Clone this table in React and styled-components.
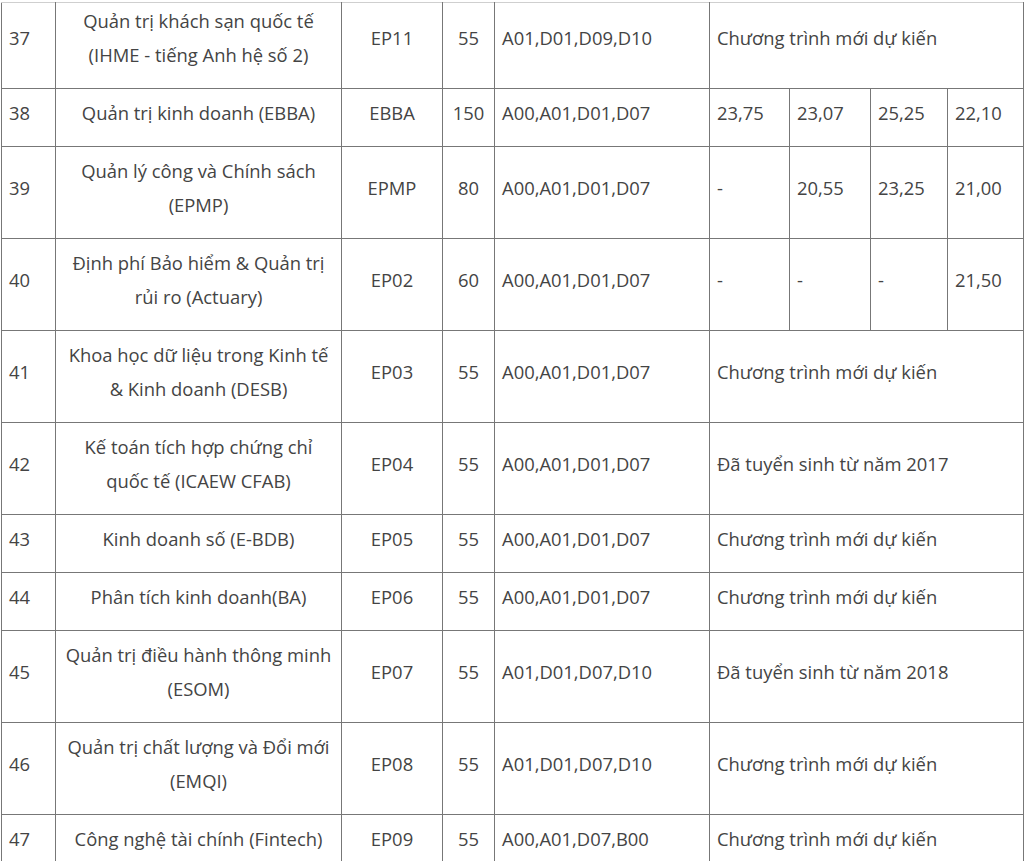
import React from "react";
import styled, { createGlobalStyle } from "styled-components";

const GlobalStyle = createGlobalStyle`
  html, body {
    margin: 0;
    padding: 0;
    background: #fff;
  }
  body {
    font-family: "Open Sans", "Liberation Sans", sans-serif;
    color: #444;
  }
`;

const Wrapper = styled.div`
  padding: 2px 0 0 1px;
`;

const Table = styled.table`
  width: 1023px;
  border-collapse: collapse;
  table-layout: fixed;
  font-size: 18.4px;
  line-height: 34px;
  border-top: 1px solid #cfcfcf;

  tbody tr:first-child td {
    padding-top: 1px;
    border-top-color: #cfcfcf;
  }
`;

const Cell = styled.td`
  border: 1px solid #777;
  padding: 7px 7px 16px;
  vertical-align: middle;
  text-align: ${props => props.$align || "left"};
  white-space: nowrap;
  overflow: hidden;
`;

const widths = [54, 286, 101, 52, 215, 80, 81, 77, 76];

const rows = [
  {
    no: 37,
    name: ["Quản trị khách sạn quốc tế", "(IHME - tiếng Anh hệ số 2)"],
    code: "EP11",
    quota: 55,
    combo: "A01,D01,D09,D10",
    note: "Chương trình mới dự kiến"
  },
  {
    no: 38,
    name: ["Quản trị kinh doanh (EBBA)"],
    code: "EBBA",
    quota: 150,
    combo: "A00,A01,D01,D07",
    scores: ["23,75", "23,07", "25,25", "22,10"]
  },
  {
    no: 39,
    name: ["Quản lý công và Chính sách", "(EPMP)"],
    code: "EPMP",
    quota: 80,
    combo: "A00,A01,D01,D07",
    scores: ["-", "20,55", "23,25", "21,00"]
  },
  {
    no: 40,
    name: ["Định phí Bảo hiểm & Quản trị", "rủi ro (Actuary)"],
    code: "EP02",
    quota: 60,
    combo: "A00,A01,D01,D07",
    scores: ["-", "-", "-", "21,50"]
  },
  {
    no: 41,
    name: ["Khoa học dữ liệu trong Kinh tế", "& Kinh doanh (DESB)"],
    code: "EP03",
    quota: 55,
    combo: "A00,A01,D01,D07",
    note: "Chương trình mới dự kiến"
  },
  {
    no: 42,
    name: ["Kế toán tích hợp chứng chỉ", "quốc tế (ICAEW CFAB)"],
    code: "EP04",
    quota: 55,
    combo: "A00,A01,D01,D07",
    note: "Đã tuyển sinh từ năm 2017"
  },
  {
    no: 43,
    name: ["Kinh doanh số (E-BDB)"],
    code: "EP05",
    quota: 55,
    combo: "A00,A01,D01,D07",
    note: "Chương trình mới dự kiến"
  },
  {
    no: 44,
    name: ["Phân tích kinh doanh(BA)"],
    code: "EP06",
    quota: 55,
    combo: "A00,A01,D01,D07",
    note: "Chương trình mới dự kiến"
  },
  {
    no: 45,
    name: ["Quản trị điều hành thông minh", "(ESOM)"],
    code: "EP07",
    quota: 55,
    combo: "A01,D01,D07,D10",
    note: "Đã tuyển sinh từ năm 2018"
  },
  {
    no: 46,
    name: ["Quản trị chất lượng và Đổi mới", "(EMQI)"],
    code: "EP08",
    quota: 55,
    combo: "A01,D01,D07,D10",
    note: "Chương trình mới dự kiến"
  },
  {
    no: 47,
    name: ["Công nghệ tài chính (Fintech)"],
    code: "EP09",
    quota: 55,
    combo: "A00,A01,D07,B00",
    note: "Chương trình mới dự kiến"
  }
];

const App = () => (
  <>
    <GlobalStyle />
    <Wrapper>
      <Table>
        <colgroup>
          {widths.map((w, i) => (
            <col key={i} style={{ width: w }} />
          ))}
        </colgroup>
        <tbody>
          {rows.map(row => (
            <tr key={row.no}>
              <Cell>{row.no}</Cell>
              <Cell $align="center">
                {row.name.map((line, i) => (
                  <div key={i}>{line}</div>
                ))}
              </Cell>
              <Cell $align="center">{row.code}</Cell>
              <Cell $align="center">{row.quota}</Cell>
              <Cell>{row.combo}</Cell>
              {row.scores ? (
                row.scores.map((s, i) => <Cell key={i}>{s}</Cell>)
              ) : (
                <Cell colSpan={4}>{row.note}</Cell>
              )}
            </tr>
          ))}
        </tbody>
      </Table>
    </Wrapper>
  </>
);

export default App;
